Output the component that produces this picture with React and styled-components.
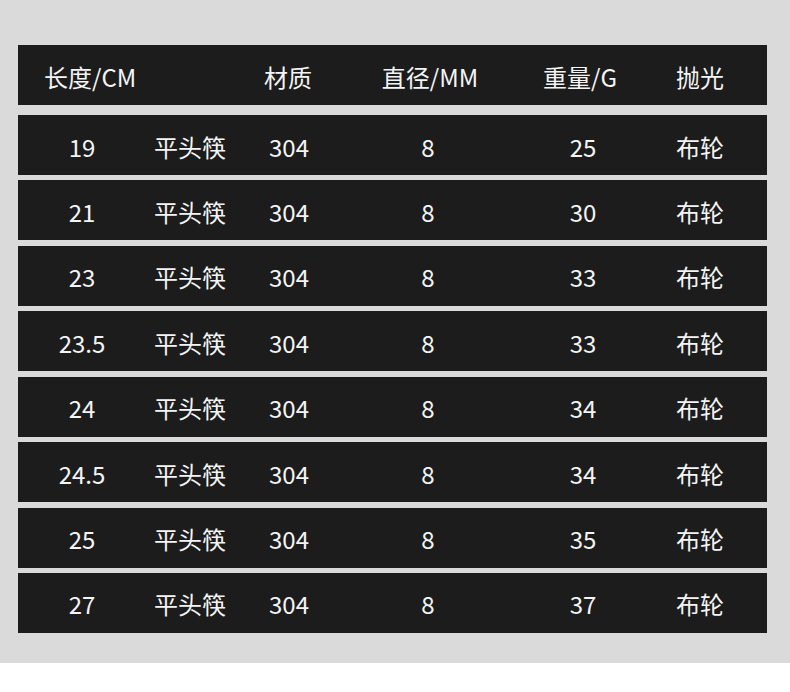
import React from 'react';
import styled, { createGlobalStyle } from 'styled-components';

const GlobalStyle = createGlobalStyle`
  html, body {
    margin: 0;
    padding: 0;
    background: #ffffff;
    font-family: "Noto Sans CJK SC", "Noto Sans", sans-serif;
  }
`;

const Page = styled.div`
  width: 790px;
  height: 692px;
  background: #ffffff;
`;

const Board = styled.div`
  height: 663px;
  background: #dadada;
  padding: 45px 23px 0 18px;
  box-sizing: border-box;
`;

const Table = styled.div`
  display: flex;
  flex-direction: column;
  gap: 5.43px;
  width: 749px;
`;

const bodyCols = '128px 88px 110px 168px 142px 92px 1fr';
const headCols = '216px 108px 176px 124px 116px 1fr';

const Row = styled.div`
  display: grid;
  grid-template-columns: ${(p) => p.$cols || bodyCols};
  align-items: center;
  height: 60px;
  background: #1c1c1c;
  color: #f4f4f4;
  font-size: 24px;
  margin-bottom: ${(p) => (p.$head ? '4.6px' : '0')};
`;

const Cell = styled.div`
  text-align: ${(p) => (p.$left ? 'left' : 'center')};
  padding-left: ${(p) => (p.$left ? '26px' : '0')};
  white-space: nowrap;
  line-height: 1;
  padding-top: 3px;
`;

const rows = [
  ['19', '25'],
  ['21', '30'],
  ['23', '33'],
  ['23.5', '33'],
  ['24', '34'],
  ['24.5', '34'],
  ['25', '35'],
  ['27', '37'],
];

export default function App() {
  return (
    <Page>
      <GlobalStyle />
      <Board>
        <Table>
          <Row $head $cols={headCols}>
            <Cell $left>长度/CM</Cell>
            <Cell>材质</Cell>
            <Cell>直径/MM</Cell>
            <Cell>重量/G</Cell>
            <Cell>抛光</Cell>
          </Row>
          {rows.map(([len, weight]) => (
            <Row key={len}>
              <Cell>{len}</Cell>
              <Cell>平头筷</Cell>
              <Cell>304</Cell>
              <Cell>8</Cell>
              <Cell>{weight}</Cell>
              <Cell>布轮</Cell>
            </Row>
          ))}
        </Table>
      </Board>
    </Page>
  );
}
